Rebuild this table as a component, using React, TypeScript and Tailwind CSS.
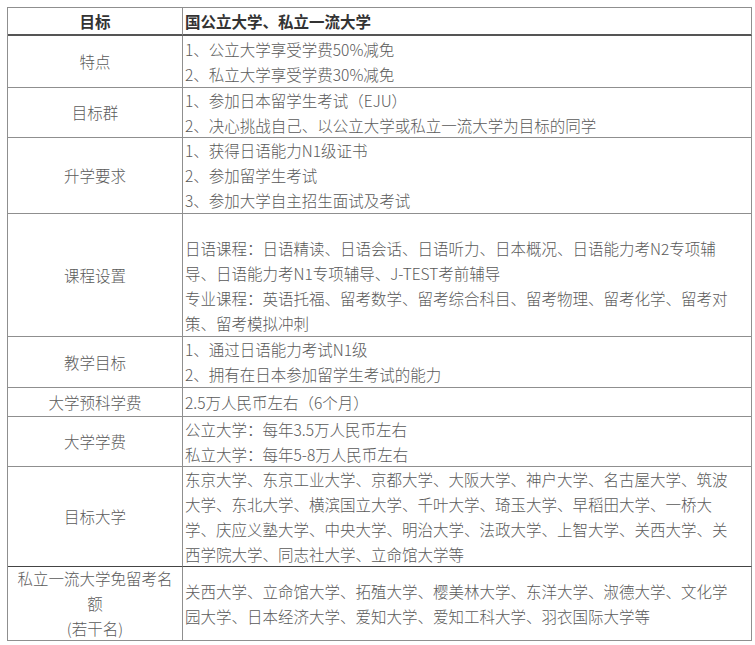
const rows: { label: string[]; lines: string[]; h: string; dark?: boolean }[] = [
  { label: ["特点"], lines: ["1、公立大学享受学费50%减免", "2、私立大学享受学费30%减免"], h: "h-[52px]" },
  { label: ["目标群"], lines: ["1、参加日本留学生考试（EJU）", "2、决心挑战自己、以公立大学或私立一流大学为目标的同学"], h: "h-[50px]" },
  { label: ["升学要求"], lines: ["1、获得日语能力N1级证书", "2、参加留学生考试", "3、参加大学自主招生面试及考试"], h: "h-[76px]" },
  {
    label: ["课程设置"],
    lines: [
      "",
      "日语课程：日语精读、日语会话、日语听力、日本概况、日语能力考N2专项辅",
      "导、日语能力考N1专项辅导、J-TEST考前辅导",
      "专业课程：英语托福、留考数学、留考综合科目、留考物理、留考化学、留考对",
      "策、留考模拟冲刺",
    ],
    h: "h-[123px]",
  },
  { label: ["教学目标"], lines: ["1、通过日语能力考试N1级", "2、拥有在日本参加留学生考试的能力"], h: "h-[51px]" },
  { label: ["大学预科学费"], lines: ["2.5万人民币左右（6个月）"], h: "h-[29px]" },
  { label: ["大学学费"], lines: ["公立大学：每年3.5万人民币左右", "私立大学：每年5-8万人民币左右"], h: "h-[50px]" },
  {
    label: ["目标大学"],
    lines: [
      "东京大学、东京工业大学、京都大学、大阪大学、神户大学、名古屋大学、筑波",
      "大学、东北大学、横滨国立大学、千叶大学、琦玉大学、早稻田大学、一桥大",
      "学、庆应义塾大学、中央大学、明治大学、法政大学、上智大学、关西大学、关",
      "西学院大学、同志社大学、立命馆大学等",
    ],
    h: "h-[100px]",
    dark: true,
  },
  {
    label: ["私立一流大学免留考名", "额", "(若干名)"],
    lines: [
      "关西大学、立命馆大学、拓殖大学、樱美林大学、东洋大学、淑德大学、文化学",
      "园大学、日本经济大学、爱知大学、爱知工科大学、羽衣国际大学等",
    ],
    h: "h-[74px]",
  },
]

export default function App() {
  return (
    <div className="min-h-screen bg-white pt-[7px] pl-[7px] text-[15.5px] font-light leading-[25px] text-[#5a5a5a] [font-family:'Noto_Sans_CJK_SC','Microsoft_YaHei',sans-serif]">
      <div className="grid w-[745px] grid-cols-[175px_569px] border-l border-t border-[#8f8f8f]">
        {/* header */}
        <div className="flex h-[28px] items-center justify-center border-b-2 border-r border-b-[#555] border-r-[#8f8f8f] font-bold text-[#333]">
          目标
        </div>
        <div className="flex h-[28px] items-center border-b-2 border-r border-b-[#555] border-r-[#8f8f8f] pl-[2px] font-bold text-[#333]">
          国公立大学、私立一流大学
        </div>

        {rows.map((r, i) => (
          <div key={i} className="contents">
            <div
              className={`flex ${r.h} flex-col items-center justify-center border-b border-r border-r-[#8f8f8f] text-center ${
                r.dark ? "border-b-[#444]" : "border-b-[#8f8f8f]"
              }`}
            >
              {r.label.map((l, j) => (
                <div key={j}>{l}</div>
              ))}
            </div>
            <div
              className={`flex ${r.h} flex-col justify-center border-b border-r border-r-[#8f8f8f] pl-[2px] ${
                r.dark ? "border-b-[#444]" : "border-b-[#8f8f8f]"
              }`}
            >
              {r.lines.map((l, j) => (
                <div key={j} className="h-[25px] whitespace-nowrap">
                  {l}
                </div>
              ))}
            </div>
          </div>
        ))}
      </div>
    </div>
  )
}
